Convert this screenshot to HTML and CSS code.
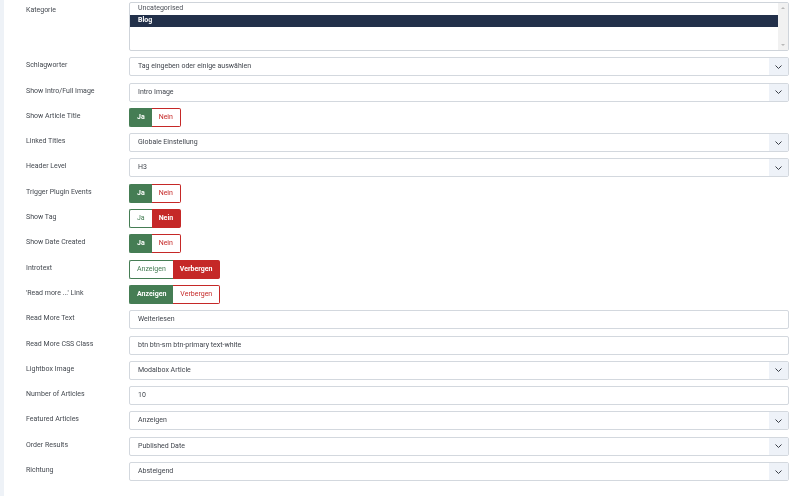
FILE: index.html
```html
<!DOCTYPE html>
<html lang="de">
<head>
    <meta charset="UTF-8">
    <meta name="viewport" content="width=device-width, initial-scale=1.0">
    <title>Modul Optionen</title>
    <link rel="stylesheet" href="styles.css">
</head>
<body>
    <main class="panel">
        <form class="optionen">

            <div class="feld">
                <label>Kategorie</label>
                <div class="liste">
                    <div class="liste-items">
                        <div class="liste-item">Uncategorised</div>
                        <div class="liste-item aktiv">Blog</div>
                    </div>
                    <div class="scrollbar">
                        <span class="pfeil-hoch"></span>
                        <span class="pfeil-runter"></span>
                    </div>
                </div>
            </div>

            <div class="feld">
                <label>Schlagworter</label>
                <div class="auswahl">Tag eingeben oder einige auswählen<span class="chevron"><svg width="7" height="4" viewBox="0 0 7 4"><path d="M0.5 0.5 L3.5 3.5 L6.5 0.5" fill="none" stroke="#3a3f48" stroke-width="1"/></svg></span></div>
            </div>

            <div class="feld">
                <label>Show Intro/Full Image</label>
                <div class="auswahl">Intro Image<span class="chevron"><svg width="7" height="4" viewBox="0 0 7 4"><path d="M0.5 0.5 L3.5 3.5 L6.5 0.5" fill="none" stroke="#3a3f48" stroke-width="1"/></svg></span></div>
            </div>

            <div class="feld">
                <label>Show Article Title</label>
                <div class="schalter">
                    <span class="btn ja an">Ja</span><span class="btn nein">Nein</span>
                </div>
            </div>

            <div class="feld">
                <label>Linked Titles</label>
                <div class="auswahl">Globale Einstellung<span class="chevron"><svg width="7" height="4" viewBox="0 0 7 4"><path d="M0.5 0.5 L3.5 3.5 L6.5 0.5" fill="none" stroke="#3a3f48" stroke-width="1"/></svg></span></div>
            </div>

            <div class="feld">
                <label>Header Level</label>
                <div class="auswahl">H3<span class="chevron"><svg width="7" height="4" viewBox="0 0 7 4"><path d="M0.5 0.5 L3.5 3.5 L6.5 0.5" fill="none" stroke="#3a3f48" stroke-width="1"/></svg></span></div>
            </div>

            <div class="feld">
                <label>Trigger Plugin Events</label>
                <div class="schalter">
                    <span class="btn ja an">Ja</span><span class="btn nein">Nein</span>
                </div>
            </div>

            <div class="feld">
                <label>Show Tag</label>
                <div class="schalter">
                    <span class="btn ja">Ja</span><span class="btn nein an">Nein</span>
                </div>
            </div>

            <div class="feld">
                <label>Show Date Created</label>
                <div class="schalter">
                    <span class="btn ja an">Ja</span><span class="btn nein">Nein</span>
                </div>
            </div>

            <div class="feld">
                <label>Introtext</label>
                <div class="schalter">
                    <span class="btn ja">Anzeigen</span><span class="btn nein an">Verbergen</span>
                </div>
            </div>

            <div class="feld">
                <label>'Read more ...' Link</label>
                <div class="schalter">
                    <span class="btn ja an">Anzeigen</span><span class="btn nein">Verbergen</span>
                </div>
            </div>

            <div class="feld">
                <label>Read More Text</label>
                <div class="eingabe">Weiterlesen</div>
            </div>

            <div class="feld">
                <label>Read More CSS Class</label>
                <div class="eingabe">btn btn-sm btn-primary text-white</div>
            </div>

            <div class="feld">
                <label>Lightbox Image</label>
                <div class="auswahl">Modalbox Article<span class="chevron"><svg width="7" height="4" viewBox="0 0 7 4"><path d="M0.5 0.5 L3.5 3.5 L6.5 0.5" fill="none" stroke="#3a3f48" stroke-width="1"/></svg></span></div>
            </div>

            <div class="feld">
                <label>Number of Articles</label>
                <div class="eingabe">10</div>
            </div>

            <div class="feld">
                <label>Featured Articles</label>
                <div class="auswahl">Anzeigen<span class="chevron"><svg width="7" height="4" viewBox="0 0 7 4"><path d="M0.5 0.5 L3.5 3.5 L6.5 0.5" fill="none" stroke="#3a3f48" stroke-width="1"/></svg></span></div>
            </div>

            <div class="feld">
                <label>Order Results</label>
                <div class="auswahl">Published Date<span class="chevron"><svg width="7" height="4" viewBox="0 0 7 4"><path d="M0.5 0.5 L3.5 3.5 L6.5 0.5" fill="none" stroke="#3a3f48" stroke-width="1"/></svg></span></div>
            </div>

            <div class="feld">
                <label>Richtung</label>
                <div class="auswahl">Absteigend<span class="chevron"><svg width="7" height="4" viewBox="0 0 7 4"><path d="M0.5 0.5 L3.5 3.5 L6.5 0.5" fill="none" stroke="#3a3f48" stroke-width="1"/></svg></span></div>
            </div>

        </form>
    </main>
</body>
</html>
```

FILE: styles.css
```css
* {
    box-sizing: border-box;
    margin: 0;
    padding: 0;
}

body {
    background-color: #eef2f7;
    font-family: Roboto, "Liberation Sans", Arial, sans-serif;
    font-size: 7px;
    color: #40454d;
    height: 496px;
    overflow: hidden;
}

.panel {
    background-color: #ffffff;
    margin-left: 4px;
    height: 496px;
    padding: 2px 11px 0 22px;
    will-change: transform;
}

.optionen {
    display: flex;
    flex-direction: column;
    gap: 6.3px;
}

.feld {
    display: flex;
    align-items: flex-start;
}

.feld label {
    width: 103px;
    flex-shrink: 0;
    line-height: 10px;
    padding-top: 3px;
    color: #444950;
}

/* listbox Kategorie */
.liste {
    width: 660px;
    height: 49px;
    border: 1px solid #cfd4da;
    border-radius: 2px;
    display: flex;
    overflow: hidden;
}

.liste-items {
    flex: 1;
}

.liste-item {
    height: 12px;
    line-height: 11px;
    padding-left: 8px;
    color: #4a4f57;
}

.liste-item.aktiv {
    background-color: #22304a;
    color: #ffffff;
    font-weight: bold;
}

.scrollbar {
    width: 10px;
    background-color: #f1f1f1;
    display: flex;
    flex-direction: column;
    justify-content: space-between;
    align-items: center;
    padding: 4px 0;
}

.pfeil-hoch {
    border-left: 2px solid transparent;
    border-right: 2px solid transparent;
    border-bottom: 2px solid #b8b8b8;
}

.pfeil-runter {
    border-left: 2px solid transparent;
    border-right: 2px solid transparent;
    border-top: 2px solid #b8b8b8;
}

/* select und input */
.auswahl,
.eingabe {
    position: relative;
    width: 660px;
    height: 19px;
    line-height: 17px;
    border: 1px solid #d3d8de;
    border-radius: 2px;
    padding-left: 8px;
    color: #40454d;
}

.chevron {
    position: absolute;
    top: 0;
    right: 0;
    width: 19px;
    height: 17px;
    background-color: #eef2f8;
    display: flex;
    align-items: center;
    justify-content: center;
}

.chevron svg {
    display: block;
}

/* ja / nein schalter */
.schalter {
    display: flex;
    height: 19px;
}

.btn {
    display: block;
    height: 19px;
    line-height: 17px;
    padding: 0 7px;
    border: 1px solid;
    background-color: #ffffff;
}

.btn.ja {
    border-color: #457d54;
    color: #457d54;
    border-radius: 2px 0 0 2px;
    border-right: 0;
}

.btn.nein {
    border-color: #c52827;
    color: #c52827;
    border-radius: 0 2px 2px 0;
    border-left: 0;
}

.btn.ja.an {
    background-color: #457d54;
    color: #ffffff;
    font-weight: bold;
}

.btn.nein.an {
    background-color: #c52827;
    color: #ffffff;
    font-weight: bold;
}
```
